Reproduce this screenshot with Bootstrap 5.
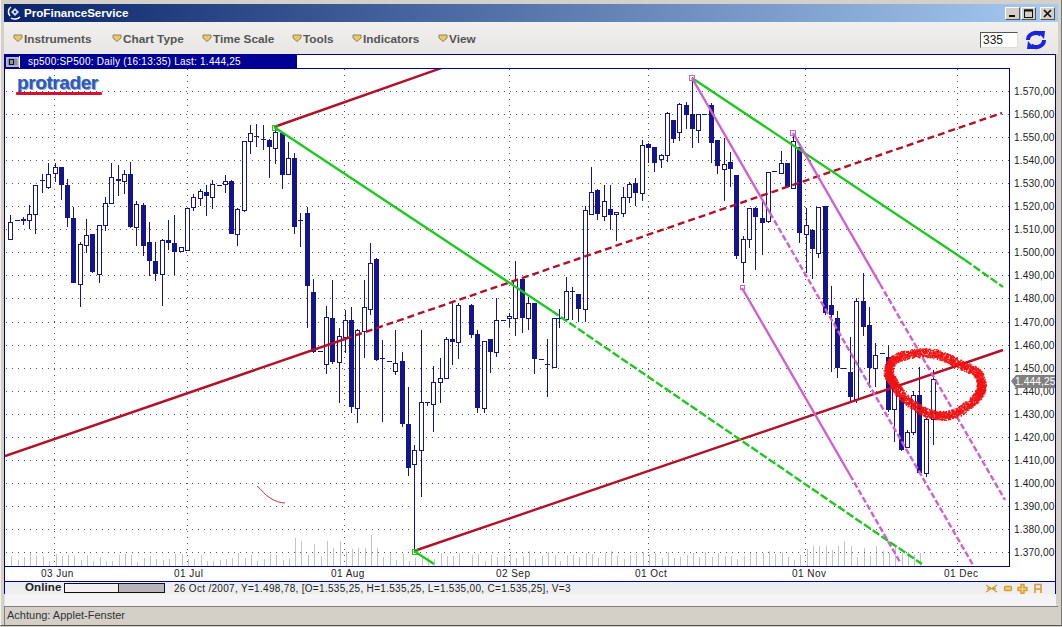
<!doctype html>
<html lang="de">
<head>
<meta charset="utf-8">
<title>ProFinanceService</title>
<link rel="stylesheet" href="https://cdn.jsdelivr.net/npm/bootstrap@5.3.0/dist/css/bootstrap.min.css">
<style>
html,body{height:100%;overflow:hidden}
body{background:#d4d0c8;font-family:"Liberation Sans",Arial,sans-serif;color:#222}
.app-win{height:627px;width:1062px;padding:4px 3px 3px;border-top:1px solid #f4f2ec;border-left:1px solid #f4f2ec;border-bottom:1px solid #555;border-right:1px solid #777;margin-top:-1px;background:#d4d0c8}
.title-strip{height:18px;background:linear-gradient(90deg,#0a246a,#a6caf0);flex:none;padding-left:3px}
.title-name{color:#fff;font-weight:700;font-size:11.6px;margin-left:1px;line-height:18px}
.win-btn{width:15px;height:13px;background:#d4d0c8;border:1px solid;border-color:#fff #555 #555 #fff;margin-left:1px;display:flex;align-items:center;justify-content:center;padding:0}
.win-btn svg{display:block}
.win-btns{margin-right:3px}
.menu-strip{height:32px;flex:none;background:linear-gradient(180deg,#f2f0ef,#e8e6e4);padding-left:9px;padding-right:11px;padding-top:3px}
.menu-entry{font-weight:700;font-size:11.8px;color:#555;display:flex;align-items:center;white-space:nowrap;letter-spacing:0}
.menu-entry svg{margin-right:1px;margin-top:-4px}
.m1{width:99px}.m2{width:90px}.m3{width:90px}.m4{width:60px}.m5{width:86px}.m6{width:40px}
.count-box{width:38px;height:16px;border:1px solid;border-color:#555 #ddd #ddd #555;background:#fff;font-size:12px;line-height:14px;padding-left:2px;color:#222;margin-right:7px}
.applet{flex:none;margin-right:2px;border:1px solid #00008c;border-bottom:0;background:#fff}
.sym-strip{height:13px;background:#fff}
.sym-tag{width:292px;height:13px;background:#000094;color:#fff;font-size:10px;line-height:13px;white-space:nowrap;letter-spacing:.24px}
.sym-btn{width:15px;height:12px;border-right:1px solid #fff;margin-right:8px;flex:none;padding:1px}
.chart-svg{display:block;width:1050px;height:513px}
.ax{font-size:10.2px;fill:#222;letter-spacing:.12px}
.axx{font-size:10px;fill:#222;letter-spacing:.45px}
.logo-t{font-size:19px;font-weight:700;fill:#2a5cc0;letter-spacing:-.4px}
.logo-s{font-size:19px;font-weight:700;fill:#9aa0b8;letter-spacing:-.4px}
.info-row{height:13px;border-top:1px solid #00008c;background:linear-gradient(180deg,#e8eef4,#f0eeee);font-size:10px;padding-left:20px;padding-right:13px;letter-spacing:.31px;white-space:nowrap}
.online-tag{font-size:11.5px;font-weight:700;color:#222;width:39px;letter-spacing:.1px}
.prog-box{width:101px;height:10px;border:1px solid #111;background:#f2f0f2;margin-right:9px;padding:0;flex:none}
.prog-fill{width:46px;height:8px;background:#b8b4bc;border:1px solid #222;border-width:0 0 0 1px}
.gap-strip{height:12px;flex:none;background:#f4f4f4;margin-right:2px;border-left:1px solid #ddd}
.foot-strip{height:19px;flex:none;background:#d4d0c8;border-top:1px solid #808080;border-left:1px solid #808080;font-size:11px;line-height:17px;padding-left:2px;color:#333}
</style>
</head>
<body class="m-0">
<div class="app-win d-flex flex-column">
  <div class="title-strip d-flex align-items-center">
    <svg width="16" height="16" viewBox="0 0 16 16"><path d="M4 2a6 6 0 0 0-1 9M4 13c3 2 7 1 9-1" fill="none" stroke="#fff" stroke-width="1.5"/><path d="M8 3l4 4-4 4-4-4z" fill="#cfe0f4"/><path d="M8 5.5L9.5 7 8 8.5 6.5 7z" fill="#0a246a"/></svg>
    <span class="title-name flex-grow-1">ProFinanceService</span>
    <div class="win-btns d-flex">
      <div class="win-btn"><svg width="11" height="9"><rect x="2" y="6" width="6" height="2" fill="#111"/></svg></div>
      <div class="win-btn"><svg width="11" height="9"><rect x="1.5" y="1" width="8" height="7.5" fill="none" stroke="#111"/><rect x="1" y="0.500" width="9" height="2" fill="#111"/></svg></div>
      <div class="win-btn ms-1"><svg width="11" height="9"><path d="M2 1l7 7M9 1L2 8" stroke="#111" stroke-width="1.7"/></svg></div>
    </div>
  </div>
  <div class="menu-strip d-flex align-items-center">
    <div class="menu-entry m1"><svg width="10" height="8" viewBox="0 0 10 8"><path d="M1 1h8v3L5 7.5 1 4z" fill="#ecc860" stroke="#8a8468"/></svg>Instruments</div>
    <div class="menu-entry m2"><svg width="10" height="8" viewBox="0 0 10 8"><path d="M1 1h8v3L5 7.5 1 4z" fill="#ecc860" stroke="#8a8468"/></svg>Chart Type</div>
    <div class="menu-entry m3"><svg width="10" height="8" viewBox="0 0 10 8"><path d="M1 1h8v3L5 7.5 1 4z" fill="#ecc860" stroke="#8a8468"/></svg>Time Scale</div>
    <div class="menu-entry m4"><svg width="10" height="8" viewBox="0 0 10 8"><path d="M1 1h8v3L5 7.5 1 4z" fill="#ecc860" stroke="#8a8468"/></svg>Tools</div>
    <div class="menu-entry m5"><svg width="10" height="8" viewBox="0 0 10 8"><path d="M1 1h8v3L5 7.5 1 4z" fill="#ecc860" stroke="#8a8468"/></svg>Indicators</div>
    <div class="menu-entry m6"><svg width="10" height="8" viewBox="0 0 10 8"><path d="M1 1h8v3L5 7.5 1 4z" fill="#ecc860" stroke="#8a8468"/></svg>View</div>
    <div class="flex-grow-1"></div>
    <div class="count-box">335</div>
    <svg width="22" height="20" viewBox="0 0 22 20"><path d="M3 10a8 7 0 0 1 13-5.500" fill="none" stroke="#1a24d8" stroke-width="4"/><path d="M12 1l8 0-1 8z" fill="#1a24d8"/><path d="M19 10a8 7 0 0 1-13 5.500" fill="none" stroke="#1a24d8" stroke-width="4"/><path d="M10 19l-8 0 1-8z" fill="#1a24d8"/></svg>
  </div>
  <div class="applet">
    <div class="sym-strip d-flex">
      <div class="sym-tag d-flex align-items-center">
        <div class="sym-btn"><svg width="13" height="10" viewBox="0 0 13 10" class="d-block"><rect width="13" height="10" fill="#a8b0c8"/><rect x="1" y="1" width="11" height="8" fill="#8a92a8" stroke="#dde" stroke-width=".6"/><rect x="3.5" y="2.500" width="4" height="5" fill="none" stroke="#111"/></svg></div>
        <span>sp500:SP500: Daily (16:13:35) Last: 1.444,25</span>
      </div>
    </div>
    <svg class="chart-svg" viewBox="5 68 1050 513" xmlns="http://www.w3.org/2000/svg">
      <defs><clipPath id="plotclip"><rect x="5" y="68" width="1004" height="498"/></clipPath></defs>
      <rect x="5" y="68" width="1050" height="513" fill="#fff"/>
      <g id="vols" clip-path="url(#plotclip)" shape-rendering="crispEdges"></g>
      <g id="grid" shape-rendering="crispEdges" stroke="#555" stroke-dasharray="1 5"></g>
      <g id="cands" clip-path="url(#plotclip)" shape-rendering="crispEdges"></g>
      <g clip-path="url(#plotclip)" fill="none" stroke-linecap="butt">
        <g stroke="#b01228" stroke-width="2.4">
          <path d="M274 127L450 65"/>
          <path d="M5 456L345 339"/>
          <path d="M345 339L1002 113" stroke-dasharray="7 4"/>
          <path d="M414 551L1003 350"/>
        </g>
        <g stroke="#1ec81e" stroke-width="2.4">
          <path d="M274 127L552 311"/>
          <path d="M552 311L922 564" stroke-dasharray="8 2.500"/>
          <path d="M692 78L965 260"/>
          <path d="M965 260L1003 287" stroke-dasharray="8 2.500"/>
          <path d="M414 551L434 564"/>
        </g>
        <g stroke="#d060d0" stroke-width="2.4">
          <path d="M692 78L770 213"/>
          <path d="M770 213L973 565" stroke-dasharray="6 2.500"/>
          <path d="M793 133L880 284"/>
          <path d="M880 284L1005 500" stroke-dasharray="6 2.500"/>
          <path d="M742 288L850 475"/>
          <path d="M850 475L900 562" stroke-dasharray="6 2.500"/>
        </g>
        <path d="M257 486C262 490 265 495 270 498S280 503 285 503" stroke="#c83048" stroke-width="1"/>
        <g shape-rendering="crispEdges" stroke-width="1">
          <rect x="689.5" y="75.5" width="5" height="5" stroke="#d060d0"/>
          <rect x="790.5" y="130.500" width="5" height="5" stroke="#d060d0"/>
          <rect x="740.5" y="285.5" width="4" height="4" stroke="#d060d0"/>
          <rect x="272.5" y="125.5" width="5" height="5" stroke="#1ec81e"/>
          <rect x="412.5" y="549.5" width="5" height="5" stroke="#1ec81e"/>
        </g>
      </g>
      <g id="scrib"></g>
      <g shape-rendering="crispEdges" stroke="#00008c" fill="none">
        <path d="M5 68.5H1009.500V566.500H5"/>
      </g>
      <g id="prices"></g>
      <path d="M1011 381l5-6h39v13h-39z" fill="#808080"/>
      <text x="1015" y="385" class="ax" style="fill:#fff">1.444,25</text>
      <text class="logo-s" x="18" y="90">protrader</text>
      <text class="logo-t" x="17" y="89">protrader</text>
      <rect x="16" y="92" width="86" height="3" rx="1" fill="#d81030"/>
      <g>
        <text class="axx" x="41" y="577">03 Jun</text>
        <text class="axx" x="174" y="577">01 Jul</text>
        <text class="axx" x="331" y="577">01 Aug</text>
        <text class="axx" x="496" y="577">02 Sep</text>
        <text class="axx" x="635" y="577">01 Oct</text>
        <text class="axx" x="792" y="577">01 Nov</text>
        <text class="axx" x="944" y="577">01 Dec</text>
      </g>
    </svg>
    <div class="info-row d-flex align-items-center">
      <span class="online-tag">Online</span>
      <div class="prog-box d-flex justify-content-end"><div class="prog-fill"></div></div>
      <span class="flex-grow-1">26 Oct /2007, Y=1.498,78, [O=1.535,25, H=1.535,25, L=1.535,00, C=1.535,25], V=3</span>
      <svg width="56" height="11" viewBox="0 0 56 11"><g fill="none" stroke="#d89a38" stroke-width="1.4"><path d="M0 2l5 3.500L0 9M11 2L6 5.500 11 9M1 5.500h9"/><rect x="18.500" y="3.500" width="7" height="4" fill="#f0d070" rx="1"/><path d="M35 1.500h3v3h3v3h-3v3h-3v-3h-3v-3h3z" fill="#f0d070"/><path d="M49 10V1.500h6V10M49 6h6" stroke-width="1.6"/></g></svg>
    </div>
  </div>
  <div class="gap-strip"></div>
  <div class="foot-strip">Achtung: Applet-Fenster</div>
</div>
<script>
(function(){
  var groups=[
   [0,110,[[31,315,337,386,388,0],[50,331,331,334,334,1],[69,322,327,332,345,1],[88,285,313,331,357,0],[106,225,225,311,372,0],[125,192,210,212,248,1],[145,160,193,231,238,0],[164,158,172,190,215,0],[183,172,172,224,270,1],[201,208,225,323,350,1],[219,292,325,519,520,1],[241,395,403,523,590,0],[259,328,376,406,430,0],[276,371,373,487,488,1],[298,345,346,491,518,0],[316,262,280,344,362,0],[334,160,202,278,280,0],[353,165,208,212,258,1],[373,180,193,214,252,0],[390,156,192,351,355,1],[409,272,283,352,407,0],[428,280,285,407,437,1],[447,337,397,452,497,1],[465,397,454,491,512,1],[487,388,391,491,587,0],[504,330,391,398,420,1],[522,315,400,425,495,1],[544,410,412,422,425,0],[562,295,295,421,421,0],[580,252,262,292,302,0],[601,237,243,265,288,0],[618,225,246,257,317,1],[637,210,223,260,297,0],[657,224,224,227,227,1],[676,196,214,223,250,0],[693,210,213,371,373,1],[712,295,298,373,407,0],[733,94,94,299,305,0],[751,44,70,94,131,0],[769,43,79,82,110,1],[788,45,87,89,120,1],[807,88,90,110,205,1],[826,45,67,115,163,0],[845,68,68,196,238,1],[865,97,145,191,192,0],[882,130,145,350,373,1],[900,310,330,331,410,1]]],
   [300,230,[[22,-70,-50,167,295,1],[39,148,186,366,368,1],[59,364,364,367,367,1],[79,228,262,403,433,0],[96,150,265,396,403,1],[118,295,317,397,520,0],[134,240,270,322,368,0],[153,232,270,530,548,1],[172,298,300,535,580,0],[193,150,232,302,385,0],[211,40,100,238,255,0],[228,83,88,390,392,1],[247,330,385,388,577,1],[268,392,392,397,397,1],[286,300,398,424,435,0],[305,365,394,582,590,1],[456,215,327,335,405,1],[439,320,327,443,443,0],[475,220,225,335,387,0],[513,223,225,315,325,1],[531,300,313,533,550,1],[553,333,333,535,550,0],[570,328,328,365,428,1],[589,205,270,367,380,0],[609,271,271,274,274,1],[628,250,259,265,290,0],[646,93,149,263,318,0],[665,145,147,265,308,1],[685,200,220,265,300,0],[702,218,220,388,433,1],[724,386,386,389,389,1],[741,328,403,406,500,1],[761,263,265,412,415,0],[778,237,264,267,295,1],[799,140,184,266,268,0],[817,170,184,187,270,1],[834,193,193,236,277,1]]],
   [395,380,[[40,20,132,263,287,1],[58,195,211,253,520,0],[79,-150,65,211,350,0],[96,65,65,70,77,1],[115,-42,7,73,155,0],[134,-66,-6,5,70,0]]],
   [580,70,[[16,408,420,717,756,0],[34,292,367,432,435,0],[51,358,360,432,450,1],[72,345,394,439,452,0],[90,345,418,434,480,1],[109,425,427,433,512,0],[130,350,382,430,440,0],[148,335,343,382,398,0],[165,325,340,370,407,1],[187,210,226,370,392,0],[204,220,223,233,278,1],[222,232,232,278,305,1],[244,253,256,266,293,0],[262,127,130,256,277,0],[279,150,151,206,218,1],[298,100,103,187,212,0],[318,97,106,134,178,1],[337,20,132,176,235,1],[355,133,133,181,218,0],[373,132,132,135,135,1],[393,100,105,218,280,1],[411,210,210,287,313,1],[432,205,281,298,392,0],[450,245,277,296,350,1],[468,316,316,557,566,1],[490,497,508,577,640,0],[508,415,415,508,533,0],[526,412,415,440,600,1],[545,392,445,458,556,1],[565,305,307,452,460,0],[583,304,304,307,307,1],[604,243,278,310,312,0],[621,280,280,350,352,1],[640,198,214,355,355,0],[657,232,232,490,518,1]]],
   [795,190,[[33,55,105,133,248,0],[50,118,120,177,268,1],[70,52,52,188,203,0],[89,48,48,370,375,1],[108,288,346,375,545,1],[126,363,385,533,563,1],[145,533,533,536,536,1],[165,440,546,620,640,1],[184,324,334,628,640,0],[203,250,334,412,437,1],[222,350,405,535,595,1],[241,460,496,535,590,0],[260,490,490,492,492,1]]],
   [850,330,[[114,45,82,240,245,1],[133,150,170,238,335,0],[152,195,200,360,362,1],[172,300,307,352,355,0],[190,182,196,306,315,0],[207,112,196,430,433,1],[229,265,267,430,442,0],[248,120,148,267,345,0]]]
  ];
  var out='',xs=[];
  groups.forEach(function(g){g[2].forEach(function(c){
    var x=Math.round(g[0]+c[0]/3),w1=Math.round(g[1]+c[1]/3),b1=Math.round(g[1]+c[2]/3),b2=Math.round(g[1]+c[3]/3),w2=Math.round(g[1]+c[4]/3),col='#14148c';
    xs.push(x);
    out+='<rect x="'+x+'" y="'+w1+'" width="1" height="'+(w2-w1)+'" fill="'+col+'"/>';
    if(c[5]) out+='<rect x="'+(x-2)+'" y="'+b1+'" width="5" height="'+Math.max(b2-b1,1)+'" fill="'+col+'"/>';
    else out+='<rect x="'+(x-2)+'.5" y="'+b1+'.5" width="4" height="'+Math.max(b2-b1,1)+'" fill="#fff" stroke="'+col+'"/>';
  });});
  document.getElementById('cands').innerHTML=out;
  var seed=12345;function rnd(){seed=(seed*1103515245+12345)&2147483647;return seed/2147483647;}
  var v='';
  xs.slice().sort(function(a,b){return a-b}).forEach(function(x){
    if(x>925)return;
    var lo=3,hi=13;
    if(x>290&&x<395){lo=8;hi=32}else if(x>=395&&x<640){lo=5;hi=15}else if(x>=640&&x<790){lo=7;hi=15}else if(x>=790){lo=6;hi=27}
    var h=Math.round(lo+rnd()*(hi-lo));
    v+='<rect x="'+(x+1)+'" y="'+(566-h)+'" width="1" height="'+h+'" fill="#c4c4c4"/>';
  });
  document.getElementById('vols').innerHTML=v;
  var gr='',pr='';
  for(var i=0;i<=20;i++){
    var y=Math.round(91+i*23.05);
    gr+='<path d="M6 '+(y+.5)+'H1009"/>';
    var val=570-i*10;
    pr+='<text class="ax" x="1014" y="'+(y+4)+'">1.'+val+',00</text>';
  }
  [54,187,344,509,648,805,957].forEach(function(x){gr+='<path d="M'+(x+.5)+' 69V566"/>';});
  document.getElementById('grid').innerHTML=gr;
  document.getElementById('prices').innerHTML=pr;
  var P=[[888,373],[893,360],[912,353],[937,354],[957,363],[977,373],[981,387],[975,398],[957,412],[937,415],[918,408],[900,393],[892,380]];
  var s='',n=P.length;
  for(var k=0;k<n;k++){
    var p0=P[(k+n-1)%n],p1=P[k],p2=P[(k+1)%n],p3=P[(k+2)%n];
    for(var t=0;t<1;t+=0.004){
      var t2=t*t,t3=t2*t;
      var px=.5*(2*p1[0]+(p2[0]-p0[0])*t+(2*p0[0]-5*p1[0]+4*p2[0]-p3[0])*t2+(3*p1[0]-p0[0]-3*p2[0]+p3[0])*t3);
      var py=.5*(2*p1[1]+(p2[1]-p0[1])*t+(2*p0[1]-5*p1[1]+4*p2[1]-p3[1])*t2+(3*p1[1]-p0[1]-3*p2[1]+p3[1])*t3);
      var a=rnd()*6.283,r=Math.sqrt(rnd())*4.8;
      s+='<rect x="'+(px+Math.cos(a)*r).toFixed(1)+'" y="'+(py+Math.sin(a)*r).toFixed(1)+'" width="1.3" height="1.3" fill="#f01414"/>';
    }
  }
  document.getElementById('scrib').innerHTML=s;
})();
</script>
<script src="https://cdn.jsdelivr.net/npm/bootstrap@5.3.0/dist/js/bootstrap.bundle.min.js"></script>
</body>
</html>
